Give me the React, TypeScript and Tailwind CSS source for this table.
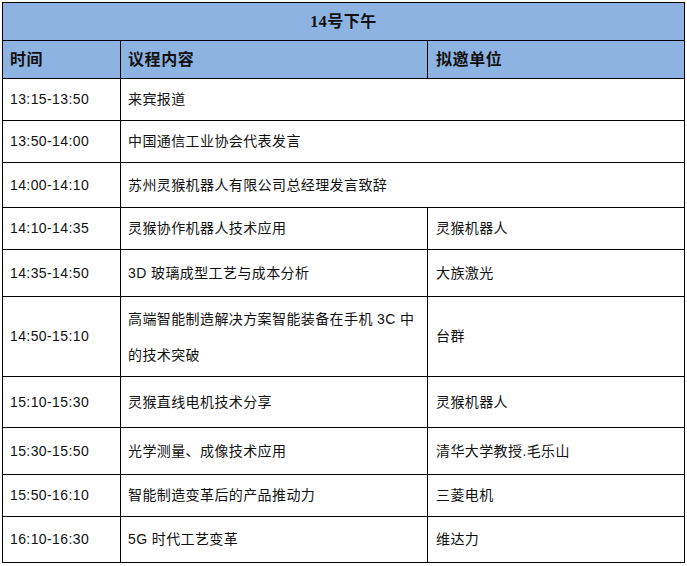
import React from "react";

type Row = {
  time: string;
  topic: React.ReactNode;
  org?: string;
  h: string;
};

const rows: Row[] = [
  { time: "13:15-13:50", topic: "来宾报道", h: "h-[42px]" },
  { time: "13:50-14:00", topic: "中国通信工业协会代表发言", h: "h-[42px]" },
  { time: "14:00-14:10", topic: "苏州灵猴机器人有限公司总经理发言致辞", h: "h-[45px]" },
  { time: "14:10-14:35", topic: "灵猴协作机器人技术应用", org: "灵猴机器人", h: "h-[42px]" },
  { time: "14:35-14:50", topic: "3D 玻璃成型工艺与成本分析", org: "大族激光", h: "h-[47px]" },
  {
    time: "14:50-15:10",
    topic: (
      <span className="block leading-[36px]">
        高端智能制造解决方案智能装备在手机 3C 中<br />的技术突破
      </span>
    ),
    org: "台群",
    h: "h-[80px]",
  },
  { time: "15:10-15:30", topic: "灵猴直线电机技术分享", org: "灵猴机器人", h: "h-[51px]" },
  { time: "15:30-15:50", topic: "光学测量、成像技术应用", org: "清华大学教授.毛乐山", h: "h-[47px]" },
  { time: "15:50-16:10", topic: "智能制造变革后的产品推动力", org: "三菱电机", h: "h-[42px]" },
  { time: "16:10-16:30", topic: "5G 时代工艺变革", org: "维达力", h: "h-[46px]" },
];

const cell = "border border-black pl-[7px] align-middle text-left";

export default function App() {
  return (
    <div className="w-[687px] h-[566px] bg-white pt-[2px] pl-[2px]">
      <table className="w-[683px] border-collapse table-fixed font-['Liberation_Sans','Noto_Sans_CJK_SC',sans-serif] text-[14px] tracking-[0.4px] text-[#111]">
        <colgroup>
          <col className="w-[118px]" />
          <col className="w-[307px]" />
          <col />
        </colgroup>
        <thead>
          <tr className="h-[38px] bg-[#8db3e2]">
            <th
              colSpan={3}
              className="border border-black text-center align-middle font-bold text-[16px] tracking-[0.5px] font-['Liberation_Serif','Noto_Sans_CJK_SC',serif]"
            >
              14号下午
            </th>
          </tr>
          <tr className="h-[38px] bg-[#8db3e2] text-[16px] font-bold tracking-[0.6px]">
            <th className={cell}>时间</th>
            <th className={cell}>议程内容</th>
            <th className={`${cell} pl-[8px]`}>拟邀单位</th>
          </tr>
        </thead>
        <tbody>
          {rows.map((r) => (
            <tr key={r.time} className={r.h}>
              <td className={cell}>{r.time}</td>
              {r.org === undefined ? (
                <td colSpan={2} className={cell}>
                  {r.topic}
                </td>
              ) : (
                <>
                  <td className={cell}>{r.topic}</td>
                  <td className={`${cell} pl-[8px]`}>{r.org}</td>
                </>
              )}
            </tr>
          ))}
        </tbody>
      </table>
    </div>
  );
}
